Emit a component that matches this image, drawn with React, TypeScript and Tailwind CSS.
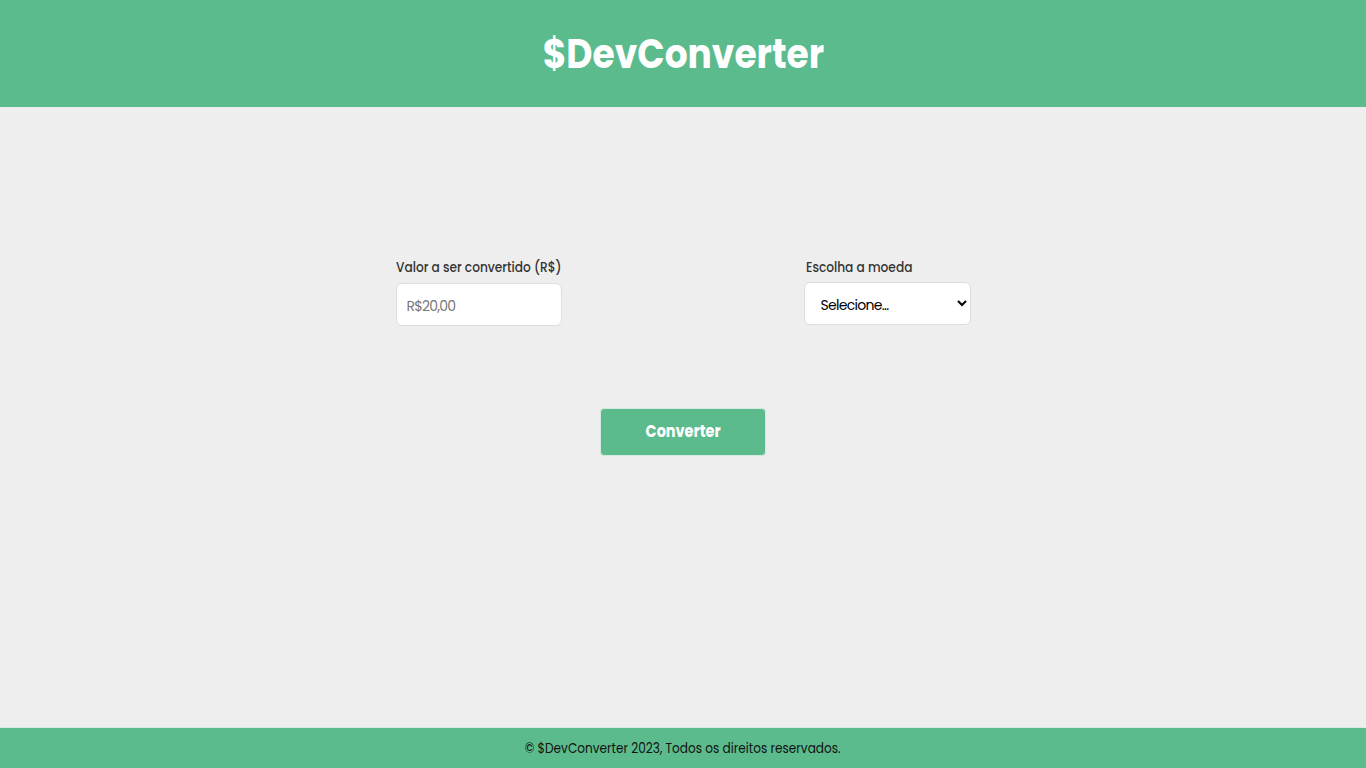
export default function App() {
  return (
    <div className="flex flex-col min-h-screen bg-[#eeeeee] font-['Poppins','Roboto',sans-serif]">
      <header className="h-[107px] bg-[#5bbb8d] flex items-center justify-center">
        <h1 className="text-[40px] font-bold text-white inline-block scale-x-[0.9]">$DevConverter</h1>
      </header>

      <main className="flex-1 flex flex-col items-center">
        <div className="w-[575px] mt-[150px] flex justify-between">
          <div className="flex flex-col">
            <label className="text-sm font-medium text-[#333] mb-[6px] inline-block origin-left scale-x-[0.87]">
              Valor a ser convertido (R$)
            </label>
            <input
              type="text"
              placeholder="R$20,00"
              className="w-[166px] h-[43px] rounded-md bg-white border border-[#dddddd] px-[10px] pt-[4px] text-sm tracking-[-0.8px] placeholder:text-[#777] outline-none"
            />
          </div>
          <div className="flex flex-col">
            <label className="text-sm font-medium text-[#333] mb-[5px] ml-[2px] inline-block origin-left scale-x-[0.87]">
              Escolha a moeda
            </label>
            <select className="w-[167px] h-[43px] rounded-md bg-white border border-[#dddddd] pl-[12px] pr-1 pt-[2px] text-sm tracking-[-0.7px] text-black outline-none">
              <option>Selecione...</option>
              <option>Dólar</option>
              <option>Euro</option>
            </select>
          </div>
        </div>

        <button className="mt-[82px] w-[166px] h-[48px] rounded-[4px] bg-[#5bbb8d] border border-[#d6e8df] text-white text-[17px] font-bold">
          <span className="inline-block scale-x-[0.85]">Converter</span>
        </button>
      </main>

      <footer className="h-[41px] bg-[#5bbb8d] border-t border-[#d9e9e1] flex items-center justify-center">
        <p className="text-sm text-[#111] inline-block scale-x-[0.865]">© $DevConverter 2023, Todos os direitos reservados.</p>
      </footer>
    </div>
  )
}
